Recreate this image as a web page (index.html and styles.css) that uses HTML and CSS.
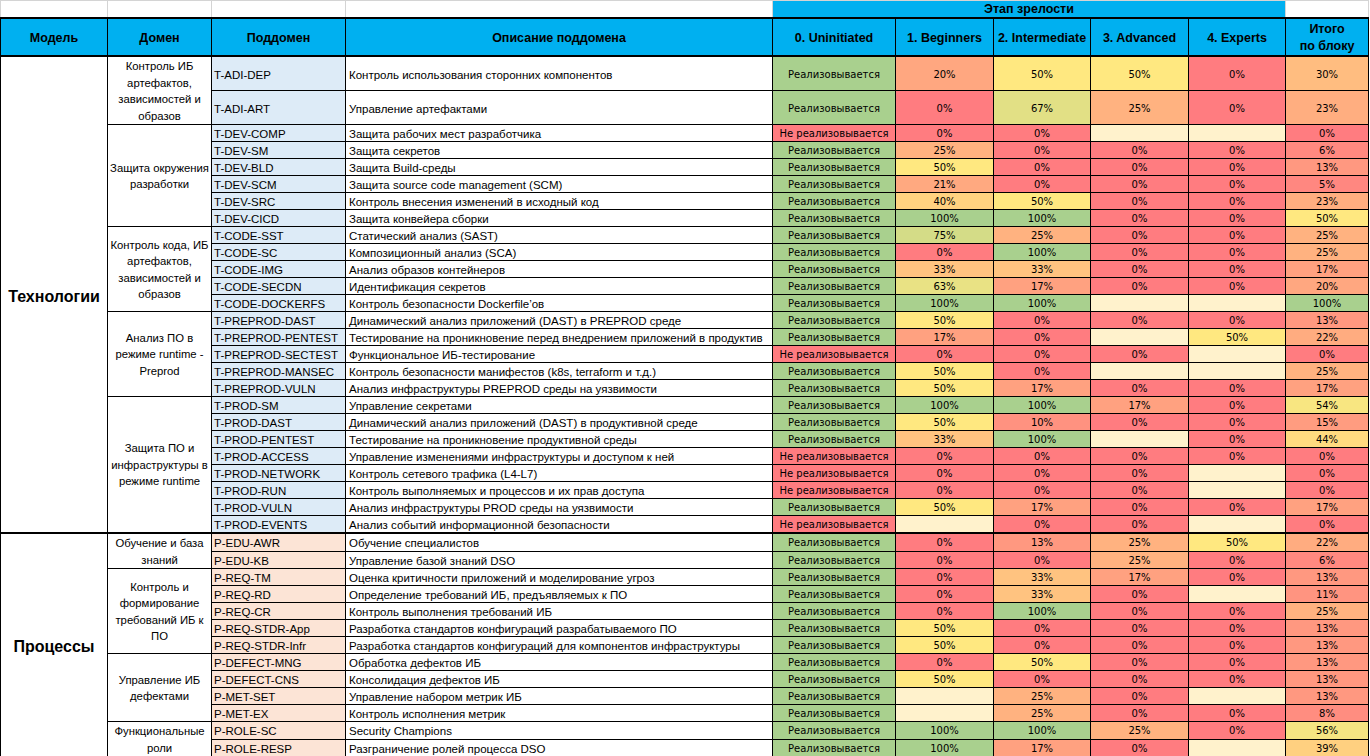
FILE: index.html
```html
<!DOCTYPE html>
<html lang="ru">
<head>
<meta charset="utf-8">
<title>Этап зрелости</title>
<link rel="stylesheet" href="styles.css">
</head>
<body>
<table class="sheet">
<colgroup>
<col class="c-model"><col class="c-dom"><col class="c-sub"><col class="c-desc"><col class="c-s0"><col class="c-s1"><col class="c-s2"><col class="c-s3"><col class="c-s4"><col class="c-tot">
</colgroup>
<thead>
<tr class="top">
<td class="blank"></td><td class="blank"></td><td class="blank"></td><td class="blank"></td>
<th class="stage" colspan="5">Этап зрелости</th>
<td class="blank"></td>
</tr>
<tr class="head">
<th>Модель</th><th>Домен</th><th>Поддомен</th><th>Описание поддомена</th>
<th>0. Uninitiated</th><th>1. Beginners</th><th>2. Intermediate</th><th>3. Advanced</th><th>4. Experts</th><th>Итого<br>по блоку</th>
</tr>
</thead>
<tbody>
<tr class="tall">
<td class="model" rowspan="26">Технологии</td>
<td class="dom" rowspan="2">Контроль ИБ артефактов, зависимостей и образов</td>
<td class="sub st">T-ADI-DEP</td><td class="desc">Контроль использования сторонних компонентов</td>
<td class="d g">Реализовывается</td><td class="d v20">20%</td><td class="d v50">50%</td><td class="d v50">50%</td><td class="d v0">0%</td><td class="d v30">30%</td>
</tr>
<tr class="tall">
<td class="sub st">T-ADI-ART</td><td class="desc">Управление артефактами</td>
<td class="d g">Реализовывается</td><td class="d v0">0%</td><td class="d v67">67%</td><td class="d v25">25%</td><td class="d v0">0%</td><td class="d v23">23%</td>
</tr>
<tr>
<td class="dom" rowspan="6">Защита окружения разработки</td>
<td class="sub st">T-DEV-COMP</td><td class="desc">Защита рабочих мест разработчика</td>
<td class="d r">Не реализовывается</td><td class="d v0">0%</td><td class="d v0">0%</td><td class="d e"></td><td class="d e"></td><td class="d v0">0%</td>
</tr>
<tr>
<td class="sub st">T-DEV-SM</td><td class="desc">Защита секретов</td>
<td class="d g">Реализовывается</td><td class="d v25">25%</td><td class="d v0">0%</td><td class="d v0">0%</td><td class="d v0">0%</td><td class="d v6">6%</td>
</tr>
<tr>
<td class="sub st">T-DEV-BLD</td><td class="desc">Защита Build-среды</td>
<td class="d g">Реализовывается</td><td class="d v50">50%</td><td class="d v0">0%</td><td class="d v0">0%</td><td class="d v0">0%</td><td class="d v13">13%</td>
</tr>
<tr>
<td class="sub st">T-DEV-SCM</td><td class="desc">Защита source code management (SCM)</td>
<td class="d g">Реализовывается</td><td class="d v21">21%</td><td class="d v0">0%</td><td class="d v0">0%</td><td class="d v0">0%</td><td class="d v5">5%</td>
</tr>
<tr>
<td class="sub st">T-DEV-SRC</td><td class="desc">Контроль внесения изменений в исходный код</td>
<td class="d g">Реализовывается</td><td class="d v40">40%</td><td class="d v50">50%</td><td class="d v0">0%</td><td class="d v0">0%</td><td class="d v23">23%</td>
</tr>
<tr>
<td class="sub st">T-DEV-CICD</td><td class="desc">Защита конвейера сборки</td>
<td class="d g">Реализовывается</td><td class="d v100">100%</td><td class="d v100">100%</td><td class="d v0">0%</td><td class="d v0">0%</td><td class="d v50">50%</td>
</tr>
<tr>
<td class="dom" rowspan="5">Контроль кода, ИБ артефактов, зависимостей и образов</td>
<td class="sub st">T-CODE-SST</td><td class="desc">Статический анализ (SAST)</td>
<td class="d g">Реализовывается</td><td class="d v75">75%</td><td class="d v25">25%</td><td class="d v0">0%</td><td class="d v0">0%</td><td class="d v25">25%</td>
</tr>
<tr>
<td class="sub st">T-CODE-SC</td><td class="desc">Композиционный анализ (SCA)</td>
<td class="d g">Реализовывается</td><td class="d v0">0%</td><td class="d v100">100%</td><td class="d v0">0%</td><td class="d v0">0%</td><td class="d v25">25%</td>
</tr>
<tr>
<td class="sub st">T-CODE-IMG</td><td class="desc">Анализ образов контейнеров</td>
<td class="d g">Реализовывается</td><td class="d v33">33%</td><td class="d v33">33%</td><td class="d v0">0%</td><td class="d v0">0%</td><td class="d v17">17%</td>
</tr>
<tr>
<td class="sub st">T-CODE-SECDN</td><td class="desc">Идентификация секретов</td>
<td class="d g">Реализовывается</td><td class="d v63">63%</td><td class="d v17">17%</td><td class="d v0">0%</td><td class="d v0">0%</td><td class="d v20">20%</td>
</tr>
<tr>
<td class="sub st">T-CODE-DOCKERFS</td><td class="desc">Контроль безопасности Dockerfile’ов</td>
<td class="d g">Реализовывается</td><td class="d v100">100%</td><td class="d v100">100%</td><td class="d e"></td><td class="d e"></td><td class="d v100">100%</td>
</tr>
<tr>
<td class="dom" rowspan="5">Анализ ПО в режиме runtime - Preprod</td>
<td class="sub st">T-PREPROD-DAST</td><td class="desc">Динамический анализ приложений (DAST) в PREPROD среде</td>
<td class="d g">Реализовывается</td><td class="d v50">50%</td><td class="d v0">0%</td><td class="d v0">0%</td><td class="d v0">0%</td><td class="d v13">13%</td>
</tr>
<tr>
<td class="sub st">T-PREPROD-PENTEST</td><td class="desc">Тестирование на проникновение перед внедрением приложений в продуктив</td>
<td class="d g">Реализовывается</td><td class="d v17">17%</td><td class="d v0">0%</td><td class="d e"></td><td class="d v50">50%</td><td class="d v22">22%</td>
</tr>
<tr>
<td class="sub st">T-PREPROD-SECTEST</td><td class="desc">Функциональное ИБ-тестирование</td>
<td class="d r">Не реализовывается</td><td class="d v0">0%</td><td class="d v0">0%</td><td class="d v0">0%</td><td class="d e"></td><td class="d v0">0%</td>
</tr>
<tr>
<td class="sub st">T-PREPROD-MANSEC</td><td class="desc">Контроль безопасности манифестов (k8s, terraform и т.д.)</td>
<td class="d g">Реализовывается</td><td class="d v50">50%</td><td class="d v0">0%</td><td class="d e"></td><td class="d e"></td><td class="d v25">25%</td>
</tr>
<tr>
<td class="sub st">T-PREPROD-VULN</td><td class="desc">Анализ инфраструктуры PREPROD среды на уязвимости</td>
<td class="d g">Реализовывается</td><td class="d v50">50%</td><td class="d v17">17%</td><td class="d v0">0%</td><td class="d v0">0%</td><td class="d v17">17%</td>
</tr>
<tr>
<td class="dom" rowspan="8">Защита ПО и инфраструктуры в режиме runtime</td>
<td class="sub st">T-PROD-SM</td><td class="desc">Управление секретами</td>
<td class="d g">Реализовывается</td><td class="d v100">100%</td><td class="d v100">100%</td><td class="d v17">17%</td><td class="d v0">0%</td><td class="d v54">54%</td>
</tr>
<tr>
<td class="sub st">T-PROD-DAST</td><td class="desc">Динамический анализ приложений (DAST) в продуктивной среде</td>
<td class="d g">Реализовывается</td><td class="d v50">50%</td><td class="d v10">10%</td><td class="d v0">0%</td><td class="d v0">0%</td><td class="d v15">15%</td>
</tr>
<tr>
<td class="sub st">T-PROD-PENTEST</td><td class="desc">Тестирование на проникновение продуктивной среды</td>
<td class="d g">Реализовывается</td><td class="d v33">33%</td><td class="d v100">100%</td><td class="d e"></td><td class="d v0">0%</td><td class="d v44">44%</td>
</tr>
<tr>
<td class="sub st">T-PROD-ACCESS</td><td class="desc">Управление изменениями инфраструктуры и доступом к ней</td>
<td class="d r">Не реализовывается</td><td class="d v0">0%</td><td class="d v0">0%</td><td class="d v0">0%</td><td class="d v0">0%</td><td class="d v0">0%</td>
</tr>
<tr>
<td class="sub st">T-PROD-NETWORK</td><td class="desc">Контроль сетевого трафика (L4-L7)</td>
<td class="d r">Не реализовывается</td><td class="d v0">0%</td><td class="d v0">0%</td><td class="d v0">0%</td><td class="d e"></td><td class="d v0">0%</td>
</tr>
<tr>
<td class="sub st">T-PROD-RUN</td><td class="desc">Контроль выполняемых и процессов и их прав доступа</td>
<td class="d r">Не реализовывается</td><td class="d v0">0%</td><td class="d v0">0%</td><td class="d v0">0%</td><td class="d e"></td><td class="d v0">0%</td>
</tr>
<tr>
<td class="sub st">T-PROD-VULN</td><td class="desc">Анализ инфраструктуры PROD среды на уязвимости</td>
<td class="d g">Реализовывается</td><td class="d v50">50%</td><td class="d v17">17%</td><td class="d v0">0%</td><td class="d v0">0%</td><td class="d v17">17%</td>
</tr>
<tr>
<td class="sub st">T-PROD-EVENTS</td><td class="desc">Анализ событий информационной безопасности</td>
<td class="d r">Не реализовывается</td><td class="d e"></td><td class="d v0">0%</td><td class="d v0">0%</td><td class="d e"></td><td class="d v0">0%</td>
</tr>
<tr class="block">
<td class="model" rowspan="13">Процессы</td>
<td class="dom" rowspan="2">Обучение и база знаний</td>
<td class="sub sp">P-EDU-AWR</td><td class="desc">Обучение специалистов</td>
<td class="d g">Реализовывается</td><td class="d v0">0%</td><td class="d v13">13%</td><td class="d v25">25%</td><td class="d v50">50%</td><td class="d v22">22%</td>
</tr>
<tr>
<td class="sub sp">P-EDU-KB</td><td class="desc">Управление базой знаний DSO</td>
<td class="d g">Реализовывается</td><td class="d v0">0%</td><td class="d v0">0%</td><td class="d v25">25%</td><td class="d v0">0%</td><td class="d v6">6%</td>
</tr>
<tr>
<td class="dom" rowspan="5">Контроль и формирование требований ИБ к ПО</td>
<td class="sub sp">P-REQ-TM</td><td class="desc">Оценка критичности приложений и моделирование угроз</td>
<td class="d g">Реализовывается</td><td class="d v0">0%</td><td class="d v33">33%</td><td class="d v17">17%</td><td class="d v0">0%</td><td class="d v13">13%</td>
</tr>
<tr>
<td class="sub sp">P-REQ-RD</td><td class="desc">Определение требований ИБ, предъявляемых к ПО</td>
<td class="d g">Реализовывается</td><td class="d v0">0%</td><td class="d v33">33%</td><td class="d v0">0%</td><td class="d e"></td><td class="d v11">11%</td>
</tr>
<tr>
<td class="sub sp">P-REQ-CR</td><td class="desc">Контроль выполнения требований ИБ</td>
<td class="d g">Реализовывается</td><td class="d v0">0%</td><td class="d v100">100%</td><td class="d v0">0%</td><td class="d v0">0%</td><td class="d v25">25%</td>
</tr>
<tr>
<td class="sub sp">P-REQ-STDR-App</td><td class="desc">Разработка стандартов конфигураций разрабатываемого ПО</td>
<td class="d g">Реализовывается</td><td class="d v50">50%</td><td class="d v0">0%</td><td class="d v0">0%</td><td class="d v0">0%</td><td class="d v13">13%</td>
</tr>
<tr>
<td class="sub sp">P-REQ-STDR-Infr</td><td class="desc">Разработка стандартов конфигураций для компонентов инфраструктуры</td>
<td class="d g">Реализовывается</td><td class="d v50">50%</td><td class="d v0">0%</td><td class="d v0">0%</td><td class="d v0">0%</td><td class="d v13">13%</td>
</tr>
<tr>
<td class="dom" rowspan="4">Управление ИБ дефектами</td>
<td class="sub sp">P-DEFECT-MNG</td><td class="desc">Обработка дефектов ИБ</td>
<td class="d g">Реализовывается</td><td class="d v0">0%</td><td class="d v50">50%</td><td class="d v0">0%</td><td class="d v0">0%</td><td class="d v13">13%</td>
</tr>
<tr>
<td class="sub sp">P-DEFECT-CNS</td><td class="desc">Консолидация дефектов ИБ</td>
<td class="d g">Реализовывается</td><td class="d v50">50%</td><td class="d v0">0%</td><td class="d v0">0%</td><td class="d v0">0%</td><td class="d v13">13%</td>
</tr>
<tr>
<td class="sub sp">P-MET-SET</td><td class="desc">Управление набором метрик ИБ</td>
<td class="d g">Реализовывается</td><td class="d e"></td><td class="d v25">25%</td><td class="d v0">0%</td><td class="d e"></td><td class="d v13">13%</td>
</tr>
<tr>
<td class="sub sp">P-MET-EX</td><td class="desc">Контроль исполнения метрик</td>
<td class="d g">Реализовывается</td><td class="d e"></td><td class="d v25">25%</td><td class="d v0">0%</td><td class="d v0">0%</td><td class="d v8">8%</td>
</tr>
<tr>
<td class="dom" rowspan="2">Функциональные роли</td>
<td class="sub sp">P-ROLE-SC</td><td class="desc">Security Champions</td>
<td class="d g">Реализовывается</td><td class="d v100">100%</td><td class="d v100">100%</td><td class="d v25">25%</td><td class="d v0">0%</td><td class="d v56">56%</td>
</tr>
<tr>
<td class="sub sp">P-ROLE-RESP</td><td class="desc">Разграничение ролей процесса DSO</td>
<td class="d g">Реализовывается</td><td class="d v100">100%</td><td class="d v17">17%</td><td class="d v0">0%</td><td class="d e"></td><td class="d v39">39%</td>
</tr>
</tbody>
</table>
</body>
</html>
```

FILE: styles.css
```css
html, body {
  margin: 0;
  padding: 0;
  background: #ffffff;
}

body {
  width: 1370px;
  height: 756px;
  overflow: hidden;
  font-family: "Liberation Sans", Arial, sans-serif;
  font-size: 11.5px;
  color: #000000;
}

.sheet {
  table-layout: fixed;
  border-collapse: collapse;
  width: 1368px;
}

.c-model { width: 107px; }
.c-dom { width: 104px; }
.c-sub { width: 134px; }
.c-desc { width: 427px; }
.c-s0 { width: 123px; }
.c-s1 { width: 98px; }
.c-s2 { width: 97px; }
.c-s3 { width: 98px; }
.c-s4 { width: 97px; }
.c-tot { width: 83px; }

.sheet td,
.sheet th {
  padding: 0;
  border: 1px solid #000000;
  overflow: hidden;
  white-space: nowrap;
  vertical-align: middle;
  line-height: 16px;
}

/* top spacer row */
.sheet .top td,
.sheet .top th {
  height: 16px;
}
.sheet .top .blank {
  border: 1px solid #d4d4d4;
  border-bottom: 0;
  background: #ffffff;
}
.sheet .top .stage {
  background: #00b0f0;
  border-top: 1px solid #d4d4d4;
  border-left: 1px solid #d4d4d4;
  border-right: 1px solid #d4d4d4;
  font-size: 12.5px;
  font-weight: bold;
  text-align: center;
  vertical-align: bottom;
  line-height: 15px;
}

/* header row */
.sheet .head th {
  height: 33px;
  padding-top: 2px;
  background: #00b0f0;
  border-top: 2px solid #000000;
  border-bottom: 2px solid #000000;
  font-size: 12.5px;
  font-weight: bold;
  text-align: center;
  line-height: 17px;
  white-space: normal;
}

.sheet tbody tr td {
  height: 14px;
  padding-top: 2px;
  line-height: 14px;
}
.sheet tbody tr.tall td {
  height: 31px;
  line-height: 14px;
}

.sheet tbody tr.block td {
  border-top: 2px solid #000000;
  height: 13px;
}

.sheet tbody tr td.model {
  background: #ffffff;
  font-size: 16px;
  font-weight: bold;
  text-align: center;
  white-space: normal;
  padding-top: 4px;
  line-height: 18px;
}

.sheet tbody tr td.dom {
  background: #ffffff;
  text-align: center;
  white-space: normal;
  line-height: 16.5px;
  font-size: 11.3px;
  padding: 1px 0 0 0;
}

.sheet .sub {
  padding-left: 2px;
  text-align: left;
}
.sheet .st { background: #ddebf7; }
.sheet .sp { background: #fce4d6; }

.sheet .desc {
  padding-left: 3px;
  text-align: left;
  background: #ffffff;
}

.sheet .d {
  text-align: center;
  font-family: "DejaVu Sans", Verdana, sans-serif;
  font-size: 10px;
}

.g { background: #a9d08e; }
.r { background: #ff7c80; }
.e { background: #fff2cc; }

.v0 { background: #ff7c80; }
.v5 { background: #ff8780; }
.v6 { background: #ff8980; }
.v8 { background: #ff8d80; }
.v10 { background: #ff9280; }
.v11 { background: #ff9480; }
.v13 { background: #ff9880; }
.v15 { background: #ff9c80; }
.v17 { background: #ffa180; }
.v20 { background: #ffa780; }
.v21 { background: #ffa980; }
.v22 { background: #ffac80; }
.v23 { background: #ffae80; }
.v25 { background: #ffb280; }
.v30 { background: #ffbd80; }
.v33 { background: #ffc380; }
.v39 { background: #ffd080; }
.v40 { background: #ffd280; }
.v44 { background: #ffdb80; }
.v50 { background: #ffe880; }
.v54 { background: #f8e681; }
.v56 { background: #f5e582; }
.v63 { background: #e9e284; }
.v67 { background: #e2e085; }
.v75 { background: #d4dc87; }
.v100 { background: #a9d08e; }
```
